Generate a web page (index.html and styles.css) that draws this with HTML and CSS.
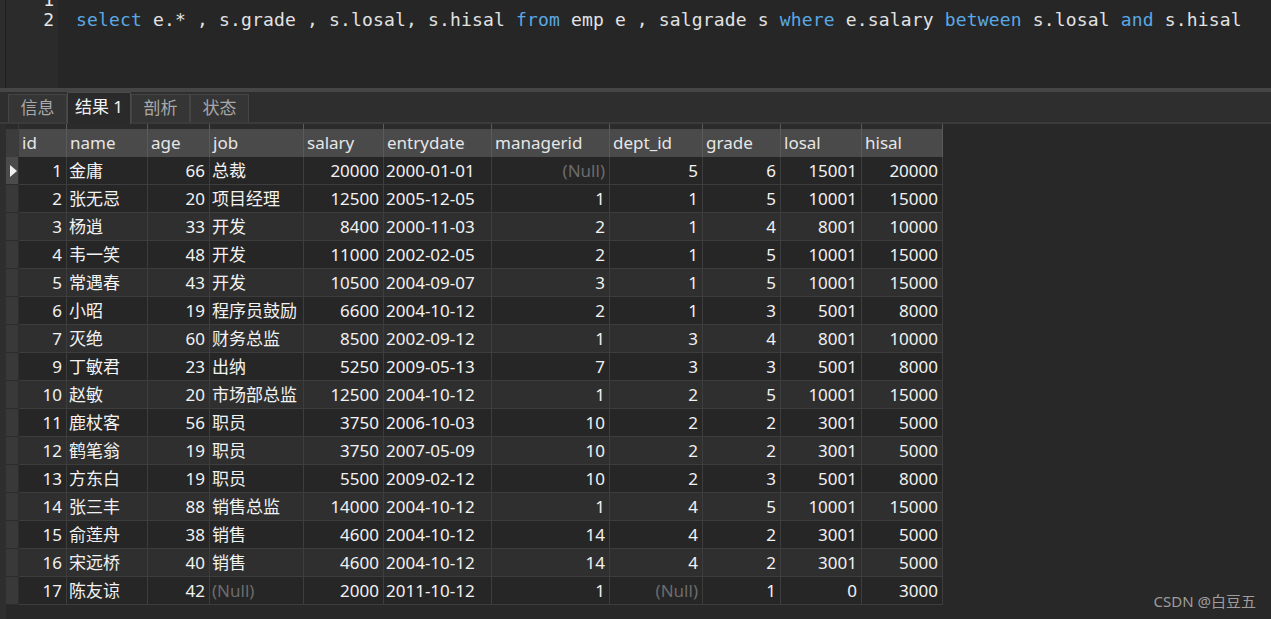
FILE: index.html
```html
<!DOCTYPE html>
<html lang="zh">
<head>
<meta charset="utf-8">
<title>Navicat 查询结果</title>
<link rel="stylesheet" href="styles.css">
</head>
<body>
<div class="editor">
  <div class="edge"></div>
  <div class="gutter">
    <div class="ln">1</div>
    <div class="ln">2</div>
  </div>
  <div class="code">
    <div class="cl">&nbsp;</div>
    <div class="cl"><span class="kw">select</span> e.* , s.grade , s.losal, s.hisal <span class="kw">from</span> emp e , salgrade s <span class="kw">where</span> e.salary <span class="kw">between</span> s.losal <span class="kw">and</span> s.hisal</div>
  </div>
</div>
<div class="divider"></div>
<div class="tabbar">
  <div class="tab">信息</div>
  <div class="tab active">结果 1</div>
  <div class="tab">剖析</div>
  <div class="tab">状态</div>
</div>
<div class="results">
  <div class="lstrip"></div>
  <table class="grid">
    <colgroup>
      <col class="c-ind"><col class="c-id"><col class="c-name"><col class="c-age"><col class="c-job"><col class="c-sal"><col class="c-date"><col class="c-mgr"><col class="c-dept"><col class="c-grade"><col class="c-lo"><col class="c-hi">
    </colgroup>
    <thead>
      <tr><th class="ind"></th><th>id</th><th>name</th><th>age</th><th>job</th><th>salary</th><th>entrydate</th><th>managerid</th><th>dept_id</th><th>grade</th><th>losal</th><th>hisal</th></tr>
    </thead>
    <tbody>
      <tr class="sel"><td class="ind"><span class="tri"></span></td><td class="n">1</td><td>金庸</td><td class="n">66</td><td>总裁</td><td class="n">20000</td><td>2000-01-01</td><td class="n null">(Null)</td><td class="n">5</td><td class="n">6</td><td class="n">15001</td><td class="n">20000</td></tr>
      <tr><td class="ind"></td><td class="n">2</td><td>张无忌</td><td class="n">20</td><td>项目经理</td><td class="n">12500</td><td>2005-12-05</td><td class="n">1</td><td class="n">1</td><td class="n">5</td><td class="n">10001</td><td class="n">15000</td></tr>
      <tr class="alt"><td class="ind"></td><td class="n">3</td><td>杨逍</td><td class="n">33</td><td>开发</td><td class="n">8400</td><td>2000-11-03</td><td class="n">2</td><td class="n">1</td><td class="n">4</td><td class="n">8001</td><td class="n">10000</td></tr>
      <tr><td class="ind"></td><td class="n">4</td><td>韦一笑</td><td class="n">48</td><td>开发</td><td class="n">11000</td><td>2002-02-05</td><td class="n">2</td><td class="n">1</td><td class="n">5</td><td class="n">10001</td><td class="n">15000</td></tr>
      <tr class="alt"><td class="ind"></td><td class="n">5</td><td>常遇春</td><td class="n">43</td><td>开发</td><td class="n">10500</td><td>2004-09-07</td><td class="n">3</td><td class="n">1</td><td class="n">5</td><td class="n">10001</td><td class="n">15000</td></tr>
      <tr><td class="ind"></td><td class="n">6</td><td>小昭</td><td class="n">19</td><td>程序员鼓励</td><td class="n">6600</td><td>2004-10-12</td><td class="n">2</td><td class="n">1</td><td class="n">3</td><td class="n">5001</td><td class="n">8000</td></tr>
      <tr class="alt"><td class="ind"></td><td class="n">7</td><td>灭绝</td><td class="n">60</td><td>财务总监</td><td class="n">8500</td><td>2002-09-12</td><td class="n">1</td><td class="n">3</td><td class="n">4</td><td class="n">8001</td><td class="n">10000</td></tr>
      <tr><td class="ind"></td><td class="n">9</td><td>丁敏君</td><td class="n">23</td><td>出纳</td><td class="n">5250</td><td>2009-05-13</td><td class="n">7</td><td class="n">3</td><td class="n">3</td><td class="n">5001</td><td class="n">8000</td></tr>
      <tr class="alt"><td class="ind"></td><td class="n">10</td><td>赵敏</td><td class="n">20</td><td>市场部总监</td><td class="n">12500</td><td>2004-10-12</td><td class="n">1</td><td class="n">2</td><td class="n">5</td><td class="n">10001</td><td class="n">15000</td></tr>
      <tr><td class="ind"></td><td class="n">11</td><td>鹿杖客</td><td class="n">56</td><td>职员</td><td class="n">3750</td><td>2006-10-03</td><td class="n">10</td><td class="n">2</td><td class="n">2</td><td class="n">3001</td><td class="n">5000</td></tr>
      <tr class="alt"><td class="ind"></td><td class="n">12</td><td>鹤笔翁</td><td class="n">19</td><td>职员</td><td class="n">3750</td><td>2007-05-09</td><td class="n">10</td><td class="n">2</td><td class="n">2</td><td class="n">3001</td><td class="n">5000</td></tr>
      <tr><td class="ind"></td><td class="n">13</td><td>方东白</td><td class="n">19</td><td>职员</td><td class="n">5500</td><td>2009-02-12</td><td class="n">10</td><td class="n">2</td><td class="n">3</td><td class="n">5001</td><td class="n">8000</td></tr>
      <tr class="alt"><td class="ind"></td><td class="n">14</td><td>张三丰</td><td class="n">88</td><td>销售总监</td><td class="n">14000</td><td>2004-10-12</td><td class="n">1</td><td class="n">4</td><td class="n">5</td><td class="n">10001</td><td class="n">15000</td></tr>
      <tr><td class="ind"></td><td class="n">15</td><td>俞莲舟</td><td class="n">38</td><td>销售</td><td class="n">4600</td><td>2004-10-12</td><td class="n">14</td><td class="n">4</td><td class="n">2</td><td class="n">3001</td><td class="n">5000</td></tr>
      <tr class="alt"><td class="ind"></td><td class="n">16</td><td>宋远桥</td><td class="n">40</td><td>销售</td><td class="n">4600</td><td>2004-10-12</td><td class="n">14</td><td class="n">4</td><td class="n">2</td><td class="n">3001</td><td class="n">5000</td></tr>
      <tr><td class="ind"></td><td class="n">17</td><td>陈友谅</td><td class="n">42</td><td class="null">(Null)</td><td class="n">2000</td><td>2011-10-12</td><td class="n">1</td><td class="n null">(Null)</td><td class="n">1</td><td class="n">0</td><td class="n">3000</td></tr>
    </tbody>
  </table>
</div>
<div class="watermark">CSDN @白豆五</div>
</body>
</html>
```

FILE: styles.css
```css
* { box-sizing: border-box; }
html, body { margin: 0; padding: 0; }
body {
  width: 1271px;
  height: 619px;
  overflow: hidden;
  background: #282828;
  font-family: "Noto Sans", "Noto Sans CJK SC", sans-serif;
  color: #f0f0f0;
  position: relative;
}

/* editor */
.editor { display: flex; height: 88px; overflow: hidden; }
.edge { width: 6px; background: #2d2d2d; border-right: 1px solid #1d1d1d; }
.gutter {
  width: 52px;
  background: #2b2b2b;
  font-family: "DejaVu Sans Mono", monospace;
  font-size: 18px;
  line-height: 20px;
  color: #e6e6e6;
  text-align: right;
  padding-right: 4px;
}
.gutter .ln:first-child { margin-top: -10px; }
.code {
  flex: 1;
  background: #262626;
  padding-left: 18px;
  font-family: "DejaVu Sans Mono", monospace;
  font-size: 18px;
  line-height: 20px;
  letter-spacing: 0.16px;
  color: #e2e2e2;
}
.code .cl { white-space: pre; }
.code .cl:first-child { margin-top: -10px; }
.kw { color: #5aa8e4; }

.divider { height: 4px; background: #464646; }

/* tabs */
.tabbar {
  display: flex;
  align-items: flex-end;
  height: 32px;
  padding-left: 8px;
  background: #2e2e2e;
  border-bottom: 2px solid #3b3b3b;
}
.tab {
  height: 28px;
  width: 59px;
  padding: 0;
  background: #353535;
  border: 1px solid #454545;
  border-bottom: none;
  color: #a8a8a8;
  font-size: 17px;
  line-height: 26px;
  text-align: center;
  white-space: nowrap;
}
.tab.active {
  height: 32px;
  width: 64px;
  margin-bottom: -2px;
  background: #2a2a2a;
  border-color: #4a4a4a;
  color: #f2f2f2;
  line-height: 28px;
}

/* results grid */
.results { display: flex; align-items: flex-start; height: 495px; }
.lstrip { width: 6px; background: #2e2e2e; align-self: stretch; }
.grid {
  table-layout: fixed;
  border-collapse: separate;
  border-spacing: 0;
  width: 937px;
  font-size: 17px;
}
.c-ind { width: 13px; }
.c-id { width: 48px; }
.c-name { width: 81px; }
.c-age { width: 62px; }
.c-job { width: 94px; }
.c-sal { width: 80px; }
.c-date { width: 108px; }
.c-mgr { width: 118px; }
.c-dept { width: 93px; }
.c-grade { width: 78px; }
.c-lo { width: 81px; }
.c-hi { width: 81px; }

.grid th {
  font-weight: normal;
  text-align: left;
  color: #e6e6e6;
  background: linear-gradient(#2b2b2b 0 5px, #4a4a4a 5px);
  border-right: 1px solid #5a5a5a;
  padding: 5px 0 0 3px;
  height: 33px;
  line-height: 20px;
  vertical-align: middle;
  white-space: nowrap;
  overflow: hidden;
}
.grid th.ind { background: linear-gradient(#2b2b2b 0 5px, #3c3c3c 5px); border-right-color: #3a3a3a; }
.grid td {
  height: 28px;
  border-right: 1px solid #3d3d3d;
  border-bottom: 1px solid #3d3d3d;
  line-height: 20px;
  vertical-align: middle;
  padding: 0 2px;
  white-space: nowrap;
  overflow: hidden;
  background: #262626;
  color: #f2f2f2;
}
.grid tr.alt td { background: #2f2f2f; }
.grid td.n { text-align: right; padding-right: 4px; }
.grid td.null { color: #6c6c6c; }
.grid td.ind { background: #393939; border-right-color: #2e2e2e; border-bottom-color: #2c2c2c; padding: 0; }
.grid tr.alt td.ind { background: #393939; }
.grid tr.sel td.ind { background: #4b4b4b; }
.tri {
  display: block;
  width: 0;
  height: 0;
  margin-left: 4px;
  border-top: 6px solid transparent;
  border-bottom: 6px solid transparent;
  border-left: 7px solid #f0f0f0;
}

.watermark {
  position: absolute;
  right: 15px;
  bottom: 8px;
  font-size: 15px;
  line-height: 20px;
  color: #9d9d9d;
}
```
